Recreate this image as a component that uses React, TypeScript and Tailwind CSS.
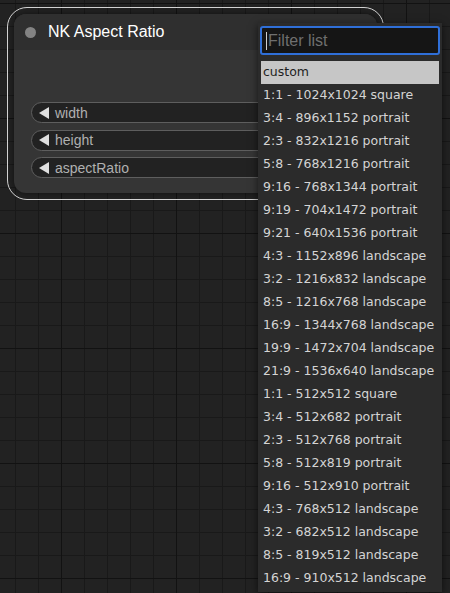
import React from "react";

const items = [
  "custom",
  "1:1 - 1024x1024 square",
  "3:4 - 896x1152 portrait",
  "2:3 - 832x1216 portrait",
  "5:8 - 768x1216 portrait",
  "9:16 - 768x1344 portrait",
  "9:19 - 704x1472 portrait",
  "9:21 - 640x1536 portrait",
  "4:3 - 1152x896 landscape",
  "3:2 - 1216x832 landscape",
  "8:5 - 1216x768 landscape",
  "16:9 - 1344x768 landscape",
  "19:9 - 1472x704 landscape",
  "21:9 - 1536x640 landscape",
  "1:1 - 512x512 square",
  "3:4 - 512x682 portrait",
  "2:3 - 512x768 portrait",
  "5:8 - 512x819 portrait",
  "9:16 - 512x910 portrait",
  "4:3 - 768x512 landscape",
  "3:2 - 682x512 landscape",
  "8:5 - 819x512 landscape",
  "16:9 - 910x512 landscape",
];

function Widget({ label }: { label: string }) {
  return (
    <div className="flex h-[21px] items-center rounded-full border border-[#5e5e5e] bg-[#222222] pl-[7px]">
      <span className="mr-[6px] h-0 w-0 border-y-[6px] border-r-[10px] border-y-transparent border-r-[#e0e0e0]" />
      <span className="text-[14px] leading-none text-[#b0b0b0]">{label}</span>
    </div>
  );
}

export default function App() {
  return (
    <div
      className="relative h-[593px] w-[450px] overflow-hidden bg-[#222222] bg-[linear-gradient(90deg,#121212_1px,transparent_1px),linear-gradient(#121212_1px,transparent_1px),linear-gradient(90deg,#191919_1px,transparent_1px),linear-gradient(#191919_1px,transparent_1px)] bg-[length:115px_115px,115px_115px,23px_23px,23px_23px] bg-[position:61px_3px]"
      style={{ fontFamily: '"Liberation Sans", Arial, sans-serif' }}
    >
      {/* node on the canvas */}
      <div className="absolute left-[7px] top-[7px] h-[193px] w-[377px] rounded-[20px] border-[1.5px] border-[#d4d4d4] p-[6px]">
        <div className="flex h-full flex-col rounded-[12px] bg-[#353535] shadow-[0_0_6px_rgba(0,0,0,0.5)]">
          <div className="flex h-[36px] items-center rounded-t-[12px] bg-[#2f2f2f] pl-[11px]">
            <span className="mr-[12px] h-[11px] w-[11px] rounded-full bg-[#838383]" />
            <span className="text-[16px] text-white">NK Aspect Ratio</span>
          </div>
          <div className="flex flex-col gap-[6.5px] px-[17px] pt-[52px]">
            <Widget label="width" />
            <Widget label="height" />
            <Widget label="aspectRatio" />
          </div>
        </div>
      </div>

      {/* combo filter menu */}
      <div
        className="absolute left-[258px] top-[23px] w-[184px] bg-[#2b2b2b] pb-[2px] shadow-[0_2px_8px_rgba(0,0,0,0.6)]"
        style={{ fontFamily: '"DejaVu Sans", Verdana, sans-serif' }}
      >
        <div className="mx-[2px] mt-[3px] flex h-[29px] items-center rounded-[3px] border-2 border-[#2f6fd8] bg-[#151515] pl-[4px]">
          <span className="mr-[1px] h-[18px] w-[1px] bg-[#cfcfcf]" />
          <span
            className="text-[16px] text-[#6f6f6f]"
            style={{ fontFamily: '"Liberation Sans", Arial, sans-serif' }}
          >
            Filter list
          </span>
        </div>
        <div className="mt-[6px] flex flex-col">
          {items.map((t, i) => (
            <div
              key={t}
              className={
                i === 0
                  ? "mx-[3px] flex h-[23px] items-center bg-[#c6c6c6] pl-[2px] text-[12.5px] text-[#1e1e1e]"
                  : "mx-[3px] flex h-[23px] items-center pl-[2px] text-[12.5px] text-[#d4d4d4]"
              }
            >
              {t}
            </div>
          ))}
        </div>
      </div>
    </div>
  );
}
